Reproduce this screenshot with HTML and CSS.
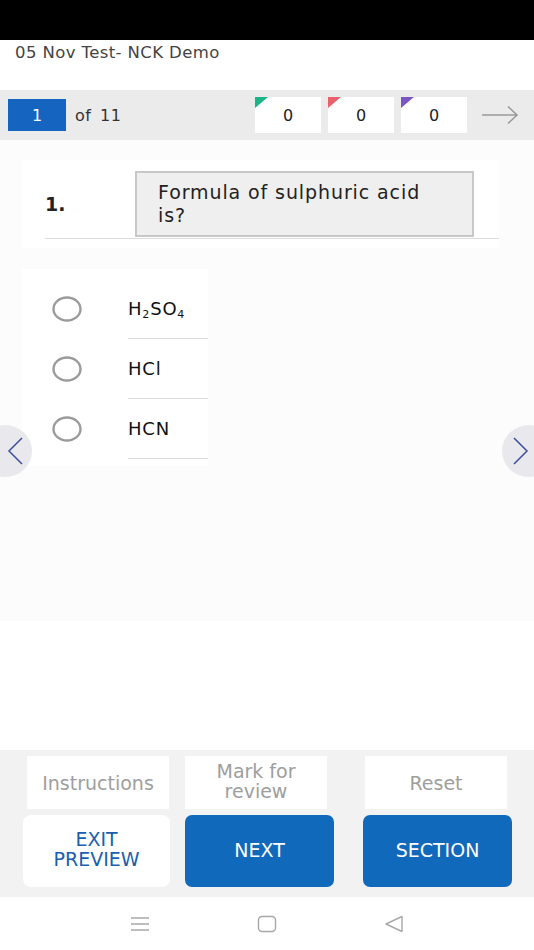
FILE: index.html
```
<!DOCTYPE html>
<html lang="en">
<head>
    <meta charset="UTF-8">
    <meta name="viewport" content="width=device-width, initial-scale=1.0">
    <title>05 Nov Test- NCK Demo</title>
    <link rel="stylesheet" href="styles.css">
</head>
<body>

    <div class="statusBar"></div>

    <div class="header">
        <span class="testTitle">05 Nov Test- NCK Demo</span>
    </div>

    <div class="topBar">
        <div class="qNumber">1</div>
        <div class="qTotal">of 11</div>
        <div class="counters">
            <div class="counter answered">0</div>
            <div class="counter skipped">0</div>
            <div class="counter marked">0</div>
        </div>
        <svg class="nextArrow" width="38" height="20" viewBox="0 0 38 20">
            <path d="M1 10 H36 M27 1.5 L36 10 L27 18.5" fill="none" stroke="#9a9a9a" stroke-width="1.6"/>
        </svg>
    </div>

    <div class="content">
        <div class="questionCard">
            <div class="questionRow">
                <div class="qLabel">1.</div>
                <div class="questionText">Formula of sulphuric acid is?</div>
            </div>
        </div>

        <div class="optionsCard">
            <div class="option">
                <svg class="radio" width="30" height="26" viewBox="0 0 30 26">
                    <ellipse cx="15" cy="13" rx="13.5" ry="11.5" fill="#fff" stroke="#9b9b9b" stroke-width="2.4"/>
                </svg>
                <div class="optionText"><span>H<sub>2</sub>SO<sub>4</sub></span></div>
            </div>
            <div class="option">
                <svg class="radio" width="30" height="26" viewBox="0 0 30 26">
                    <ellipse cx="15" cy="13" rx="13.5" ry="11.5" fill="#fff" stroke="#9b9b9b" stroke-width="2.4"/>
                </svg>
                <div class="optionText"><span>HCl</span></div>
            </div>
            <div class="option">
                <svg class="radio" width="30" height="26" viewBox="0 0 30 26">
                    <ellipse cx="15" cy="13" rx="13.5" ry="11.5" fill="#fff" stroke="#9b9b9b" stroke-width="2.4"/>
                </svg>
                <div class="optionText"><span>HCN</span></div>
            </div>
        </div>

        <div class="navCircle prev">
            <svg width="18" height="30" viewBox="0 0 18 30">
                <path d="M16 2 L3 15 L16 28" fill="none" stroke="#3d4f9f" stroke-width="1.5"/>
            </svg>
        </div>
        <div class="navCircle next">
            <svg width="18" height="30" viewBox="0 0 18 30">
                <path d="M2 2 L15 15 L2 28" fill="none" stroke="#3d4f9f" stroke-width="1.5"/>
            </svg>
        </div>
    </div>

    <div class="bottomPanel">
        <div class="btnRow topRow">
            <button class="lightBtn instructions">Instructions</button>
            <button class="lightBtn markBtn">Mark for<br>review</button>
            <button class="lightBtn resetBtn">Reset</button>
        </div>
        <div class="btnRow mainRow">
            <button class="exitBtn">EXIT<br>PREVIEW</button>
            <button class="blueBtn nextBtn">NEXT</button>
            <button class="blueBtn sectionBtn">SECTION</button>
        </div>
    </div>

    <div class="navBar">
        <svg width="20" height="18" viewBox="0 0 20 18">
            <path d="M1 3 H19 M1 9 H19 M1 15 H19" stroke="#a8a8a8" stroke-width="1.4"/>
        </svg>
        <svg width="20" height="18" viewBox="0 0 20 18">
            <rect x="1.5" y="1.5" width="17" height="15" rx="3.5" fill="none" stroke="#a8a8a8" stroke-width="1.4"/>
        </svg>
        <svg width="20" height="18" viewBox="0 0 20 18">
            <path d="M18 1.5 L2 9 L18 16.5 Z" fill="none" stroke="#a8a8a8" stroke-width="1.4" stroke-linejoin="round"/>
        </svg>
    </div>

</body>
</html>
```

FILE: styles.css
```
body {
    font-family: 'DejaVu Sans', 'Liberation Sans', Arial, sans-serif;
    margin: 0;
    width: 534px;
    background-color: #fff;
    color: #222;
}

.statusBar {
    height: 40px;
    background-color: #000;
}

.header {
    height: 50px;
    padding: 3px 0 0 15px;
    box-sizing: border-box;
}

.testTitle {
    font-size: 16.5px;
    line-height: 20px;
    letter-spacing: 0.4px;
    color: #444;
}

/* question counter bar */
.topBar {
    height: 50px;
    background-color: #ebebeb;
    display: flex;
    align-items: center;
    padding: 0 15px 0 8px;
}

.qNumber {
    width: 58px;
    height: 32px;
    background-color: #1565c0;
    color: #fff;
    font-size: 16px;
    display: flex;
    align-items: center;
    justify-content: center;
}

.qTotal {
    margin-left: 9px;
    font-size: 16px;
    letter-spacing: 0.5px;
    word-spacing: 3px;
    color: #333;
}

.counters {
    margin-left: auto;
    display: flex;
    gap: 7px;
}

.counter {
    position: relative;
    width: 66px;
    height: 36px;
    background-color: #fff;
    font-size: 16px;
    color: #222;
    display: flex;
    align-items: center;
    justify-content: center;
}

.counter::before {
    content: "";
    position: absolute;
    left: 0;
    top: 0;
    width: 13px;
    height: 11px;
    clip-path: polygon(0 0, 100% 0, 0 100%);
}

.answered::before { background-color: #1db388; }
.skipped::before { background-color: #e9616b; }
.marked::before { background-color: #7b55c4; }

.nextArrow {
    margin-left: 14px;
}

/* question area */
.content {
    position: relative;
    height: 481px;
    background-color: #fcfcfc;
    padding-top: 20px;
    box-sizing: border-box;
}

.questionCard {
    margin-left: 22px;
    width: 477px;
    background-color: #fff;
    padding: 11px 0 9px 23px;
    box-sizing: border-box;
}

.questionRow {
    display: flex;
    align-items: center;
    padding-bottom: 1px;
    border-bottom: 1px solid #dcdcdc;
}

.qLabel {
    width: 90px;
    font-size: 19px;
    font-weight: bold;
    color: #222;
}

.questionText {
    width: 339px;
    height: 66px;
    box-sizing: border-box;
    border: 2px solid #c8c8c8;
    background-color: #efefef;
    padding: 8px 30px 0 21px;
    font-size: 19px;
    line-height: 23px;
    letter-spacing: 0.9px;
    color: #222;
}

.optionsCard {
    margin: 21px 0 0 22px;
    width: 186px;
    background-color: #fff;
    padding: 10px 0 7px;
}

.option {
    display: flex;
    align-items: center;
    height: 60px;
}

.radio {
    margin-left: 30px;
    flex-shrink: 0;
}

.optionText {
    margin-left: 46px;
    flex: 1;
    height: 59px;
    border-bottom: 1px solid #dcdcdc;
    display: flex;
    align-items: center;
    font-size: 18px;
    letter-spacing: 0.8px;
    color: #111;
}

.optionText sub {
    font-size: 11px;
    line-height: 0;
    vertical-align: -3px;
}

.navCircle {
    position: absolute;
    top: 285px;
    width: 54px;
    height: 52px;
    border-radius: 50%;
    background-color: #e9e9ed;
    display: flex;
    align-items: center;
}

.prev {
    left: -22px;
    justify-content: flex-end;
    padding-right: 8px;
    box-sizing: border-box;
}

.next {
    right: -22px;
    padding-left: 10px;
    box-sizing: border-box;
}

/* bottom buttons */
.bottomPanel {
    margin-top: 129px;
    background-color: #f2f2f2;
    padding: 6px 0 10px;
}

.btnRow {
    display: flex;
}

.topRow {
    height: 53px;
    margin-bottom: 6px;
}

.mainRow {
    height: 72px;
}

button {
    font-family: 'DejaVu Sans', 'Liberation Sans', Arial, sans-serif;
    font-size: 19px;
    line-height: 20px;
    border: none;
    padding: 0;
    cursor: pointer;
}

.lightBtn {
    width: 142px;
    background-color: #fff;
    color: #9e9e9e;
}

.instructions { margin-left: 27px; }
.markBtn { margin-left: 16px; padding-bottom: 4px; }
.resetBtn { margin-left: 38px; }

.exitBtn {
    margin-left: 23px;
    width: 147px;
    background-color: #fff;
    color: #1a5fae;
    border-radius: 8px;
    padding-bottom: 4px;
}

.blueBtn {
    width: 149px;
    background-color: #1169bb;
    color: #fff;
    border-radius: 7px;
    padding-bottom: 2px;
}

.nextBtn { margin-left: 15px; }
.sectionBtn { margin-left: 29px; }

.navBar {
    height: 53px;
    display: flex;
    align-items: center;
    padding-left: 130px;
    gap: 107px;
}
```
